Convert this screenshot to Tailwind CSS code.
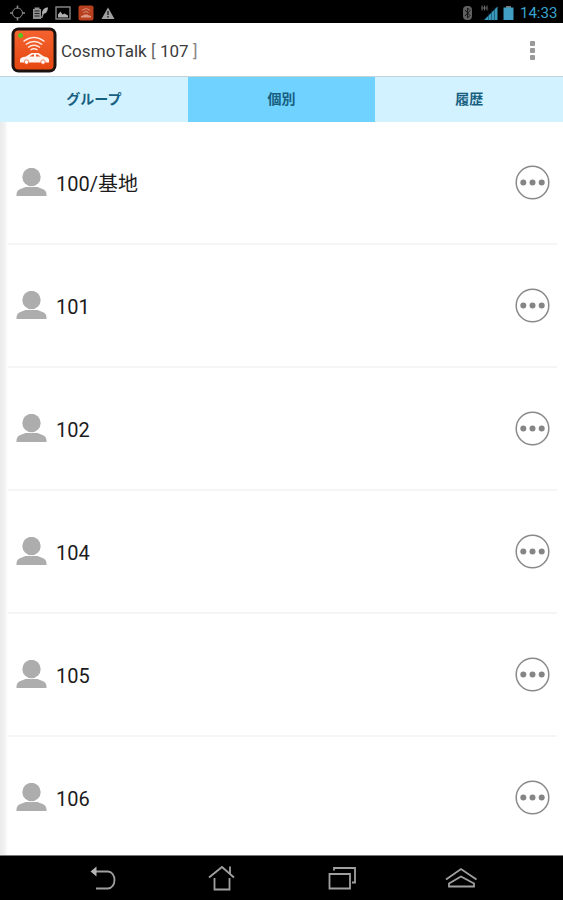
<!doctype html>
<html lang="ja">
	<head>
		<meta charset="UTF-8" />
		<meta name="viewport" content="width=device-width, initial-scale=1.0" />
		<title>CosmoTalk</title>
		<script src="https://cdn.jsdelivr.net/npm/@tailwindcss/browser@4"></script>
	</head>
	<body class="bg-white">
		<div
			class="flex flex-col w-[563px] h-[900px] overflow-hidden font-[Roboto,'Noto_Sans_CJK_JP',sans-serif]"
		>
			<!-- status bar -->
			<div class="flex items-center justify-between h-[23px] pl-[10px] pr-[5px] bg-black shrink-0">
				<div class="flex items-center gap-[7px] pt-[2px]">
					<svg class="w-[15px] h-4" viewBox="0 0 15 16" fill="none" stroke="#8a8a8a">
						<circle cx="7.5" cy="8" r="5" />
						<path d="M7.5 0.5v3M7.5 12.5v3M0 8h3M12 8h3" stroke-width="1.5" />
					</svg>
					<svg class="w-4 h-4" viewBox="0 0 16 16">
						<path d="M2.500 4V2.500h5V4H9v10H1V4z" fill="#909090" />
						<path d="M2.500 6h5M2.500 8.500h5M2.500 11h5" stroke="#222" />
						<path d="M16 2.500c-4 0-6 2.500-6 6.500 4 0 5.500-2 6-6.500z" fill="#b0b0b0" />
						<path d="M9.500 13l2-5" stroke="#a0a0a0" stroke-width="1.300" />
					</svg>
					<svg class="w-4 h-4" viewBox="0 0 16 16">
						<path d="M1 2h14v12H1z" fill="none" stroke="#858585" stroke-width="1.400" />
						<path d="M3 12.500V9.500l2.500-3 2 3 2-1 3.500 2v2z" fill="#b0b0b0" />
					</svg>
					<svg class="w-4 h-4" viewBox="0 0 16 16">
						<rect x="0.500" y="0.500" width="15" height="15" rx="2" fill="#b9401f" />
						<path d="M4 5.500q4-3.500 8 0M5.500 7.500q2.500-2 5 0" fill="none" stroke="#dc9a83" stroke-width="0.900" />
						<path d="M3 12.500v-1.500l2-.5 1.500-1h3l1.500 1 2 .5v1.500z" fill="#dc9a83" />
					</svg>
					<svg class="w-[14px] h-4" viewBox="0 0 14 16">
						<path d="M7 2.500L13.500 14H0.500z" fill="#a0a0a0" />
						<path d="M7 6v4M7 11v1.500" stroke="#222" stroke-width="1.400" />
					</svg>
				</div>
				<div class="flex items-center pt-[2px]">
					<svg class="w-[9px] h-4 mr-[9px]" viewBox="0 0 9 16">
						<rect width="9" height="14" y="1" rx="4" fill="#606060" />
						<path d="M2 5l5 5.500L4.500 13V3L7 5.500 2 11" fill="none" stroke="#151515" />
					</svg>
					<svg class="w-[17px] h-4 mr-[5px]" viewBox="0 0 17 16">
						<path d="M1 0.500v5M3.500 0.500v5M1 3h5M6 0.500v5" fill="none" stroke="#777" stroke-width="0.900" />
						<path d="M16.500 1.500v13.500H3z" fill="#3999bd" />
						<path d="M7.500 8v8M10.500 5v11M13.500 2v14" stroke="#0b3444" stroke-width="0.500" />
					</svg>
					<svg class="w-[11px] h-4 mr-[6px]" viewBox="0 0 11 16">
						<path d="M3 1h5v1.500h2.500V15H.5V2.500H3z" fill="#419fc4" />
						<path d="M3 1h5v1.500H3z" fill="#777" />
					</svg>
					<span class="text-[15px] leading-4 w-[38px] whitespace-nowrap text-[#39a3cf]">14:33</span>
				</div>
			</div>

			<!-- title bar -->
			<div class="flex items-center h-[54px] pl-[11px] pr-[28px] border-b border-[#c3d4d8] bg-white shrink-0">
				<svg class="w-[46px] h-[46px] shrink-0" viewBox="0 0 46 46">
					<defs>
						<linearGradient id="tile" x1="0" y1="0" x2="0" y2="1">
							<stop offset="0" stop-color="#f4622f" />
							<stop offset="1" stop-color="#e64710" />
						</linearGradient>
					</defs>
					<rect x="0.500" y="0.500" width="45" height="45" rx="7" fill="#1c1310" />
					<rect x="3.500" y="3.500" width="39" height="39" rx="4" fill="url(#tile)" />
					<circle cx="9.500" cy="8.500" r="2.500" fill="#55c51c" />
					<g fill="none" stroke="#fde7de" stroke-width="1.500">
						<path d="M12.500 14.500q10.500-8 21 0" />
						<path d="M14.800 17.500q8.200-6 16.400 0" />
						<path d="M17 20.500q6-4.500 12 0" />
						<path d="M19.500 23q3.500-2.500 7 0" />
					</g>
					<path d="M9 35.500v-3q.5-2.500 6-3l5.500-3.500h7l5.500 3.500q4.500.5 5 3v3z" fill="#fff4ef" />
					<path d="M18.500 29.500l3-2h1.500v2zM25 29.500v-2h1.500l3 2z" fill="#ee5522" />
					<circle cx="15.500" cy="35" r="2.200" fill="#fff" stroke="#ee5522" stroke-width="0.700" />
					<circle cx="32" cy="35" r="2.200" fill="#fff" stroke="#ee5522" stroke-width="0.700" />
				</svg>
				<h1 class="ml-1 pt-1 text-[17px] tracking-[0.05px] text-[#3c3c3c] whitespace-pre">CosmoTalk <span class="text-[#666]">[</span> 107 <span class="text-[#888]">]</span></h1>
				<div class="flex flex-col gap-[2px] ml-auto pt-[1px]">
					<span class="size-[5px] rounded-[1px] bg-[#999]"></span>
					<span class="size-[5px] rounded-[1px] bg-[#999]"></span>
					<span class="size-[5px] rounded-[1px] bg-[#999]"></span>
				</div>
			</div>

			<!-- tabs -->
			<div class="grid grid-cols-3 h-[45px] text-[14px] font-bold text-[#17607f] shrink-0">
				<div class="flex items-center justify-center bg-[#d2f2ff]">グループ</div>
				<div class="flex items-center justify-center bg-[#6fd2ff]">個別</div>
				<div class="flex items-center justify-center bg-[#d2f2ff]">履歴</div>
			</div>

			<!-- contacts -->
			<div class="flex flex-1 min-h-0 overflow-hidden">
				<div class="w-2 shrink-0 bg-linear-to-r from-[#ebebeb] via-[#f0f0f0] to-white"></div>
				<div id="contacts" class="w-[549px] shrink-0"></div>
			</div>

			<!-- navigation bar -->
			<div class="flex h-[45px] border-t border-[#777] bg-black shrink-0">
				<svg class="w-full h-11" viewBox="0 0 563 44" fill="none" stroke="#a0a0a0" stroke-width="1.800">
					<path d="M94 15.500h14a6.500 8.500 0 0 1 0 17H96" />
					<path d="M90.500 15.500l6-5v10z" fill="#b4b4b4" stroke="none" />
					<path d="M209 21.500l13-10.500 12 10.500M230 17.500v-7M214.500 22v11.500h15V22" />
					<path d="M329.500 18h20.500v14.500h-20.500zM334 14.500v-2.500h21v14.500h-3" />
					<path d="M446 23.500l15-10.500 15.500 10.500M449 30.500v-3l12-7 13 7v3z" />
				</svg>
			</div>
		</div>

		<script>
			const contacts = ['100/基地', '101', '102', '104', '105', '106'];

			document.getElementById('contacts').innerHTML = contacts
				.map(
					name => `
						<div class="flex items-center h-[123px] pl-2 pr-[7px] border-b-2 border-[#f5f5f5]">
							<svg class="w-[31px] h-[30px] shrink-0" viewBox="0 0 31 30">
								<path d="M0.500 28v-2q.5-4 4-5l5-2h12l5 2q3.500 1 4 5v2z" fill="#adadad" />
								<circle cx="15.500" cy="9" r="10.200" fill="#fff" />
								<circle cx="15.500" cy="9" r="9.200" fill="#adadad" />
							</svg>
							<span class="ml-[9px] pt-[2px] text-[20px] leading-6 text-[#1c1c1c]">${name}</span>
							<svg class="ml-auto w-[35px] h-[35px] shrink-0" viewBox="0 0 35 35">
								<circle cx="17.500" cy="17.500" r="16.300" fill="none" stroke="#8a8a8a" stroke-width="1.500" />
								<g fill="#858585">
									<circle cx="8.300" cy="17.500" r="3" />
									<circle cx="17.500" cy="17.500" r="3" />
									<circle cx="26.700" cy="17.500" r="3" />
								</g>
							</svg>
						</div>`,
				)
				.join('');
		</script>
	</body>
</html>
